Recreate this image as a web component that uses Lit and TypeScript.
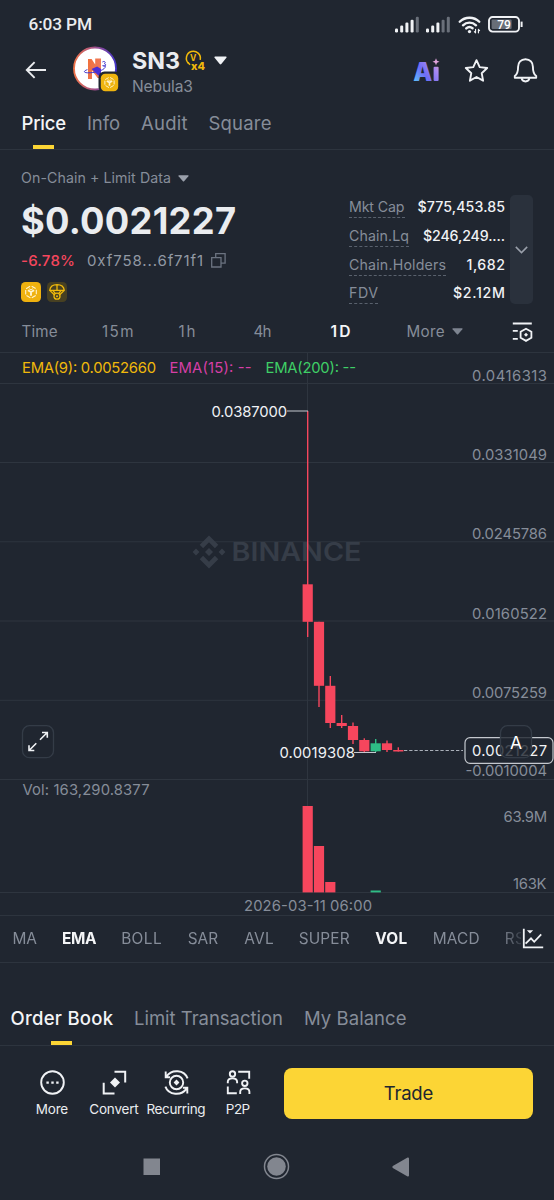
import { LitElement, html, svg, css } from "lit";
import { customElement, property } from "lit/decorators.js";

/** Single-line label whose tracking is adjusted so that it fills a given width. */
@customElement("fit-text")
class FitText extends LitElement {
  static styles = css`
    :host { display: inline-block; white-space: nowrap; }
    span { display: inline-block; }
  `;
  @property({ type: Number }) w = 0;
  @property() text = "";
  render() {
    return html`<span>${this.text}</span>`;
  }
  updated() {
    const el = this.renderRoot.querySelector("span") as HTMLElement;
    el.style.letterSpacing = "0px";
    const natural = el.getBoundingClientRect().width;
    const step = (this.w - natural) / Math.max(1, this.text.length - 1);
    el.style.letterSpacing = `${step.toFixed(3)}px`;
    this.style.width = `${this.w}px`;
  }
}

const t = (text: string, w: number, cls = "") =>
  html`<fit-text class=${cls} .text=${text} .w=${w}></fit-text>`;

/* x-centre, body and wick extents in chart pixels */
const CANDLES = [
  { x: 307.7, top: 584.3, bottom: 621.8, high: 411, low: 637, up: false },
  { x: 319, top: 621.8, bottom: 685.8, high: 621.8, low: 707, up: false },
  { x: 330.3, top: 685.8, bottom: 723, high: 676, low: 728, up: false },
  { x: 341.7, top: 723, bottom: 726, high: 715, low: 728, up: false },
  { x: 353, top: 726, bottom: 740, high: 722.5, low: 744, up: false },
  { x: 364.3, top: 740, bottom: 751.3, high: 738.3, low: 752, up: false },
  { x: 375.7, top: 743.3, bottom: 751.3, high: 739, low: 752, up: true },
  { x: 387, top: 743.3, bottom: 750, high: 740.5, low: 752, up: false },
  { x: 398.3, top: 750, bottom: 751.5, high: 747.3, low: 751.5, up: false },
];
const VOLUMES = [
  { x: 307.7, top: 806, up: false },
  { x: 319, top: 846, up: false },
  { x: 330.3, top: 882, up: false },
  { x: 375.7, top: 890.5, up: true },
];
const GRID = [383.5, 462.5, 541.8, 621, 700.3, 779.5, 892.5];
const AXIS: [string, number, number, number][] = [
  ["0.0416313", 472, 75, 380.8],
  ["0.0331049", 472, 75, 460],
  ["0.0245786", 472, 75, 539.3],
  ["0.0160522", 472, 75, 618.7],
  ["0.0075259", 472, 75, 697.7],
  ["-0.0010004", 465.5, 81.5, 775.7],
  ["63.9M", 503.5, 43.5, 822.3],
  ["163K", 513, 33.5, 888.5],
];

const RED = "#f6465d";
const GREEN = "#2ebd85";

const cube = svg`
  <g fill="none" stroke="#fff4cf" stroke-linejoin="round">
    <path d="M10 3.800l5.300 3.100v6.200L10 16.200l-5.300-3.100V6.900z" stroke-width="1.100" stroke-dasharray="4.600 1.500" stroke-dashoffset="-0.800"/>
    <path d="M6.900 8.200L10 10l3.100-1.800M10 10v3.800" stroke-width="1.900"/>
    <path d="M8 6.700l2 1.100 2-1.100" stroke-width=".9"/>
  </g>`;

@customElement("app-root")
class AppRoot extends LitElement {
  static styles = css`
    * { box-sizing: border-box; }
    :host {
      display: flex; flex-direction: column; width: 554px; height: 1200px; overflow: hidden;
      background: #202630; color: #eaecef; font-family: Inter, sans-serif; line-height: 1;
    }
    svg { display: block; flex: none; overflow: visible; }
    .row { display: flex; align-items: center; flex: none; }
    .grey { color: #868d99; }

    .status { height: 49px; padding: 0 31.5px 0 28.5px; justify-content: space-between; font: 500 17.3px/1 Roboto, sans-serif; }
    .status .icons { gap: 7px; }

    .header { height: 48px; padding-top: 1px; align-items: flex-start; }
    .back { margin: 11px 0 0 25px; }
    .avatar { margin: -5px 0 0 26px; }
    .names { margin-left: 10px; width: 269px; display: flex; flex-direction: column; }
    .names .row { height: 21px; gap: 5px; }
    .sym { font-size: 23.3px; font-weight: 700; }
    .caret { margin-left: 2px; }
    .full { font-size: 15.6px; margin-top: 8px; }
    .ai { margin: 7px 0 0 12px; }
    .star { margin: 8px 0 0 22.5px; }
    .bell { margin: 8px 0 0 24px; }

    .tabs { position: relative; height: 53px; padding-left: 21.5px; font-size: 18.5px; border-bottom: 1px solid #2d343e; gap: 21px; }
    .on { color: #f4f5f7; font-weight: 500; }
    .mark { position: absolute; bottom: 0; width: 21px; height: 4.5px; background: #fcd535; }
    .tabs .mark { left: 33px; }

    .summary { height: 161px; display: flex; flex: none; }
    .left { width: 349px; padding-left: 21px; }
    .source { height: 22px; margin-top: 17px; font-size: 14.2px; gap: 7px; }
    .price { height: 44px; margin-top: 10px; font-size: 36.3px; font-weight: 700; align-items: center; display: flex; }
    .change { height: 20px; margin-top: 7px; font-size: 15px; }
    .down { color: #f6465d; margin-right: 12px; font-weight: 500; }
    .addr { margin-right: 8px; color: #9299a4; }
    .badges { gap: 6px; margin-top: 12px; }
    .stats { width: 156px; padding-top: 43px; }
    .stat { height: 28.7px; justify-content: space-between; font-size: 14.2px; }
    .stat .key { height: 22px; padding-top: 4px; border-bottom: 1px dashed #59616d; color: #868d99; }
    .stat .val { color: #f0f2f5; font-weight: 500; }
    .expand { width: 23px; height: 109px; margin: 45px 0 0 5px; border-radius: 5px; background: #2a313c; display: flex; align-items: center; justify-content: center; }

    .intervals { height: 42px; padding-left: 21.5px; font-size: 15.2px; color: #868d99; border-bottom: 1px solid #2d343e; }
    .i1 { margin-left: 44.5px; } .i2 { margin-left: 45px; } .i3 { margin-left: 58px; }
    .i4 { margin-left: 59px; color: #f4f5f7; font-weight: 600; font-size: 15.6px; }
    .i5 { margin: 0 7px 0 56px; }
    .tune { margin-left: 49px; }

    .chart text { font-family: Inter, sans-serif; font-size: 14.8px; }
    .chart .logo { font-size: 25.5px; font-weight: 600; }
    .chart .auto { font-size: 17.5px; }

    .indicators { height: 48px; border-top: 1px solid #2d343e; border-bottom: 1px solid #2d343e; font-size: 15.4px; color: #868d99; }
    .scroller { width: 521px; height: 46px; padding-left: 12.5px; overflow: hidden; mask-image: linear-gradient(90deg, #000 500px, transparent 527px); }
    .sel { color: #f4f5f7; font-weight: 700; }
    .m1 { margin-left: 25px; } .m2 { margin-left: 25px; } .m3 { margin-left: 26px; } .m4 { margin-left: 26px; }
    .m5 { margin-left: 25px; } .m6 { margin-left: 25.5px; } .m7 { margin-left: 25px; }
    .bar { width: 1px; height: 17px; background: #333b47; margin: 0 13px 0 12.5px; }
    .study { margin-left: 1px; }

    .orders { position: relative; height: 56px; margin-top: 27px; padding: 2px 0 0 10.5px; font-size: 18.5px; gap: 21px; border-bottom: 1px solid #2d343e; }
    .orders .mark { left: 51px; }

    .actions { height: 89px; padding: 22px 21px 0 21px; align-items: flex-start; font-size: 13.5px; }
    .act { width: 62px; display: flex; flex-direction: column; align-items: center; gap: 7px; }
    .act svg { margin-top: 0.5px; }
    .trade { width: 249px; height: 51px; margin-left: 15px; border-radius: 8px; background: #fcd535; color: #202630; font-size: 18.5px; display: flex; align-items: center; justify-content: center; }
    .nav { height: 65px; padding: 0 144.5px 2px 143px; justify-content: space-between; }
  `;

  signal(bars: number) {
    return html`<svg width="24.500" height="17" viewBox="0 0 24.500 17">
      ${[0, 1, 2, 3, 4].map((i) => svg`<rect x=${i * 5.2} y=${12.4 - i * 2.9} width="3" height=${4 + i * 2.9} rx="1.200"
        fill=${i < bars ? "#f0f2f5" : "#6a707a"}/>`)}
    </svg>`;
  }

  statusBar() {
    return html`<div class="row status">
      ${t("6:03 PM", 63.5)}
      <div class="row icons">
        ${this.signal(4)} ${this.signal(3)}
        <svg width="23" height="18" viewBox="0 0 24 18" fill="none" stroke="#f0f2f5" stroke-width="2.500" stroke-linecap="round">
          <path d="M1.800 5.600a14.600 14.600 0 0 1 20.400 0M5.200 9.300a9.800 9.800 0 0 1 13.600 0M8.600 12.600a5 5 0 0 1 6.600-.2"/>
          <circle cx="12" cy="15.800" r="1.700" fill="#f0f2f5" stroke="none"/>
          <path d="M18.300 13.600v3.600M21.300 13.600v3.600M17.100 16l1.200 1.200M21.300 13.600l1.200 1.200" stroke-width="1.200"/>
        </svg>
        <svg width="35" height="17" viewBox="0 0 35 17">
          <rect x="1" y="1" width="30" height="14.600" rx="3.600" fill="none" stroke="#f0f2f5" stroke-width="1.900"/>
          <rect x="3.600" y="3.600" width="20" height="9.400" rx="1" fill="#686e78"/>
          <path d="M33.600 5.600v5.400" stroke="#f0f2f5" stroke-width="2"/>
          <text x="16" y="12.500" font-family="Roboto, sans-serif" font-size="12" font-weight="500" fill="#fff" text-anchor="middle">79</text>
        </svg>
      </div>
    </div>`;
  }

  header() {
    return html`<div class="row header">
      <svg class="back" width="22" height="18" viewBox="0 0 22 18" fill="none" stroke="#eaecef" stroke-width="1.900">
        <path d="M21 9H2.200M9.600 1.200L1.800 9l7.800 7.800"/>
      </svg>
      <svg class="avatar" width="49" height="48" viewBox="0 0 49 48">
        <defs>
          <linearGradient id="ring" x1="0" x2="1"><stop offset="0" stop-color="#f07348"/><stop offset=".5" stop-color="#a0508c"/><stop offset="1" stop-color="#4536c8"/></linearGradient>
          <linearGradient id="n" x1="0" x2="1" y2=".3"><stop offset="0" stop-color="#f0703c"/><stop offset="1" stop-color="#ef7a5a"/></linearGradient>
        </defs>
        <circle cx="22" cy="23.500" r="21" fill="#fff" stroke="url(#ring)" stroke-width="1.800"/>
        <path d="M15 14h3.600l3.600 5.400V13.600H28V33h-3.400L19 25.600V34h-4z" fill="url(#n)"/>
        <path d="M18.600 24l5.600-2.400 3.800 2.400V31l-2.600-.4z" fill="#4b2fd6"/>
        <path d="M14.400 24.600c-4 1.400-4 3 0 3.200 7 .2 15.600-2 17.600-5.200 1.200-2-1.200-2.400-2.600-1.900" fill="none" stroke="#4335cc" stroke-width="1"/>
        <path d="M29.400 17c2-1.400 4 .3 2 1.700 2.200.4 1.500 2.900-1 2.600" fill="none" stroke="#4335cc" stroke-width="1"/>
        <rect x="25.500" y="26.500" width="22" height="21.500" rx="6" fill="#202630"/>
        <g transform="translate(27.800 28.800)"><rect width="17.400" height="17.400" rx="4.500" fill="#efb40f"/><g transform="scale(.87)">${cube}</g></g>
      </svg>
      <div class="names">
        <div class="row">
          ${t("SN3", 48, "sym")}
          <svg width="22" height="22" viewBox="0 0 22 22">
            <path d="M3.600 13.400a7 7 0 1 1 11.600-3.600" fill="none" stroke="#f0b90b" stroke-width="1.500"/>
            <path d="M2.700 12.200l2.400 2.600" stroke="#f0b90b" stroke-width="1.500"/>
            <text x="8.200" y="10.600" font-family="Inter, sans-serif" font-size="8.500" font-weight="700" fill="#f0b90b" text-anchor="middle">V</text>
            <text x="6" y="20.300" font-family="Inter, sans-serif" font-size="11" font-weight="800" fill="#f0b90b" textLength="14" lengthAdjust="spacingAndGlyphs">x4</text>
          </svg>
          <svg class="caret" width="13" height="9" viewBox="0 0 13 9"><path d="M1 .5h11q1 .3.400 1.200L7.300 8q-.8.800-1.600 0L.6 1.700Q0 .8 1 .5z" fill="#f0f2f5"/></svg>
        </div>
        ${t("Nebula3", 61, "full grey")}
      </div>
      <svg class="ai" width="28" height="26" viewBox="0 0 28 26">
        <defs><linearGradient id="aig" gradientUnits="userSpaceOnUse" x1="0" y1="24" x2="27" y2="4">
          <stop offset="0" stop-color="#5cc4f8"/><stop offset=".4" stop-color="#6f6cf6"/><stop offset=".75" stop-color="#a98af2"/><stop offset="1" stop-color="#f2a39c"/></linearGradient></defs>
        <text x=".3" y="24" font-family="Inter, sans-serif" font-size="26" font-weight="900" fill="url(#aig)" textLength="19" lengthAdjust="spacingAndGlyphs">A</text>
        <rect x="20.600" y="9.800" width="5" height="14.200" rx="1" fill="url(#aig)"/>
        <path d="M23 1.300l1 2.500 2.500 1-2.500 1-1 2.500-1-2.500-2.500-1 2.500-1z" fill="#e0a4dc"/>
      </svg>
      <svg class="star" width="25" height="26" viewBox="0 0 25 26" fill="none" stroke="#f0f2f5" stroke-width="1.900" stroke-linejoin="round">
        <path d="M12.500 2.200l3.200 6.900 7.500.9-5.500 5.200 1.400 7.500-6.600-3.700-6.600 3.700 1.400-7.500L1.800 10l7.500-.9z"/>
      </svg>
      <svg class="bell" width="25" height="26" viewBox="0 0 25 26" fill="none" stroke="#f0f2f5" stroke-width="1.900" stroke-linejoin="round">
        <path d="M12.500 1.200c-4.700 0-7.400 3.400-7.400 7.600 0 5-.5 7.300-3.300 9.300v1.600h21.400v-1.600c-2.800-2-3.300-4.300-3.300-9.300 0-4.200-2.700-7.600-7.400-7.600z"/>
        <path d="M8.600 20.200c.6 4.400 7.200 4.400 7.800 0"/>
      </svg>
    </div>`;
  }

  summary() {
    const stats: [string, number, string, number][] = [
      ["Mkt Cap", 55.5, "$775,453.85", 87.5],
      ["Chain.Lq", 60, "$246,249....", 82],
      ["Chain.Holders", 97, "1,682", 38.5],
      ["FDV", 29, "$2.12M", 52],
    ];
    return html`<div class="summary">
      <div class="left">
        <div class="row source grey">${t("On-Chain + Limit Data", 150)}
          <svg width="11" height="7" viewBox="0 0 11 7"><path d="M.8.3h9.400q.8.300.2 1L6.100 6.300q-.6.500-1.200 0L.6 1.300Q0 .6.8.3z" fill="#9aa0ab"/></svg>
        </div>
        <div class="price">${t("$0.0021227", 215)}</div>
        <div class="row change">${t("-6.78%", 54, "down")}${t("0xf758...6f71f1", 116, "addr")}
          <svg width="15" height="15" viewBox="0 0 15 15" fill="none" stroke="#6b7380" stroke-width="1.300"><path d="M.7 4.700h9.300V14H.7zM4.700 4.700v-4h9.400v9.400H10"/></svg>
        </div>
        <div class="row badges">
          <svg width="20" height="20" viewBox="0 0 20 20"><rect width="20" height="20" rx="4.500" fill="#efb10f"/>${cube}</svg>
          <svg width="20" height="20" viewBox="0 0 20 20"><rect width="20" height="20" rx="4.500" fill="#474022"/>
            <g fill="none" stroke="#f0b90b" stroke-width="1.300" stroke-linejoin="round">
              <path d="M2.700 8.400C3.200 4.600 6.200 2.700 10 2.700s6.800 1.900 7.300 5.700zM10 2.700v5.700M2.700 8.400l4.600 4.400M17.300 8.400l-4.600 4.400M6 8.600l2.400 3M14 8.600l-2.400 3"/>
              <circle cx="10" cy="14.200" r="3"/></g><circle cx="10" cy="14.200" r="1" fill="#f0b90b"/></svg>
        </div>
      </div>
      <div class="stats">
        ${stats.map(([k, kw, v, vw]) => html`<div class="row stat">${t(k, kw, "key")}${t(v, vw, "val")}</div>`)}
      </div>
      <div class="expand"><svg width="13" height="8" viewBox="0 0 13 8" fill="none" stroke="#9aa0ab" stroke-width="1.500"><path d="M.8.9l5.700 5.700L12.200.9"/></svg></div>
    </div>`;
  }

  chart() {
    return html`<svg class="chart" width="554" height="562" viewBox="0 353 554 562">
      <g stroke="#2e353f" stroke-width="1">
        ${GRID.map((y) => svg`<path d="M0 ${y}H554"/>`)}
        <path d="M307.500 353V892"/>
      </g>
      <g fill="#363d48">
        <path d="M209 535.500l9.300 9.300-3.400 3.400-5.900-5.900-5.900 5.900-3.400-3.400zM209 568.500l-9.300-9.300 3.400-3.400 5.900 5.900 5.900-5.900 3.400 3.400z"/>
        <path d="M196 548.600l3.400 3.400-3.400 3.400-3.400-3.400zM222 548.600l3.400 3.400-3.400 3.400-3.400-3.400zM209 548l4 4-4 4-4-4z"/>
        <text class="logo" x="231.500" y="561.200" textLength="130" lengthAdjust="spacingAndGlyphs">BINANCE</text>
      </g>
      ${CANDLES.map((c) => svg`<g fill=${c.up ? GREEN : RED}>
        <rect x=${c.x - 0.7} y=${c.high} width="1.400" height=${c.low - c.high}/>
        <rect x=${c.x - 5.1} y=${c.top} width="10.200" height=${c.bottom - c.top}/></g>`)}
      ${VOLUMES.map((v) => svg`<rect x=${v.x - 5.1} y=${v.top} width="10.200" height=${892.4 - v.top} fill=${v.up ? GREEN : RED}/>`)}
      <path d="M287 411H308M354 752.500H376" stroke="#c4c8ce" stroke-width="1.200"/>
      <path d="M404 750.500H463" stroke="#aab0b9" stroke-width="1.100" stroke-dasharray="3.300 1.900"/>
      <g fill="#f0b90b"><text x="22" y="372.600" textLength="134">EMA(9): 0.0052660</text></g>
      <g fill="#d63fa6"><text x="169.500" y="372.600" textLength="82">EMA(15): --</text></g>
      <g fill="#3fcf66"><text x="265.500" y="372.600" textLength="90.500">EMA(200): --</text></g>
      <g fill="#868d99">
        ${AXIS.map(([s, x, w, y]) => svg`<text x=${x} y=${y} textLength=${w}>${s}</text>`)}
        <text x="22.500" y="795.300" textLength="127">Vol: 163,290.8377</text>
        <text x="244" y="911" textLength="128">2026-03-11 06:00</text>
      </g>
      <g fill="#f0f2f5">
        <text x="211.500" y="416.600" textLength="75.500">0.0387000</text>
        <text x="279.500" y="758" textLength="75.500">0.0019308</text>
      </g>
      <rect x="465" y="737.700" width="88" height="25.600" rx="5" fill="#202630" stroke="#c4c8ce" stroke-width="1.200"/>
      <text x="472" y="755.800" textLength="75" fill="#f0f2f5">0.0021227</text>
      <rect x="500.500" y="725.700" width="31" height="32" rx="7" fill="#202630" fill-opacity=".82" stroke="#343c47" stroke-width="1.300"/>
      <text class="auto" x="516" y="748.500" text-anchor="middle" fill="#fff">A</text>
      <rect x="22.500" y="725.700" width="31" height="32" rx="7" fill="none" stroke="#343c47" stroke-width="1.300"/>
      <g fill="none" stroke="#f0f2f5" stroke-width="1.600">
        <path d="M40 739.700l7-7M42 732.500h5.300v5.300M36.300 743.300l-7 7M34.300 750.500H29v-5.300"/>
      </g>
    </svg>`;
  }

  actions() {
    return html`<div class="row actions">
      <div class="act">
        <svg width="27" height="27" viewBox="0 0 27 27"><circle cx="13.500" cy="13.500" r="11.300" fill="none" stroke="#f0f2f5" stroke-width="1.900"/>
          <path d="M7.400 12.400h2.400v2.400H7.400zM12.300 12.400h2.400v2.400h-2.400zM17.200 12.400h2.400v2.400h-2.400z" fill="#f0f2f5"/></svg>
        ${t("More", 32.5)}
      </div>
      <div class="act">
        <svg width="27" height="27" viewBox="0 0 27 27" fill="none" stroke="#f0f2f5" stroke-width="2">
          <path d="M13.500 2.700h10.700v10.700M2.700 13.800v10.600h10.800"/><path d="M14 8.500l5 5-5 5-5-5z" fill="#f0f2f5" stroke="none"/></svg>
        ${t("Convert", 49.5)}
      </div>
      <div class="act">
        <svg width="27" height="27" viewBox="0 0 27 27" fill="none" stroke="#f0f2f5" stroke-width="1.900">
          <circle cx="13.500" cy="13.500" r="6.700"/><path d="M13.500 10.600l2.900 2.900-2.900 2.900-2.900-2.900z" fill="#f0f2f5" stroke="none"/>
          <path d="M24.600 9.400C21.400.6 8.600-.2 3.500 7.400M2.700 2.600v5.600h4.400M2.400 17.600c3.200 8.800 16 9.600 21.100 2M24.300 24.400v-5.600h-4.400"/></svg>
        ${t("Recurring", 59)}
      </div>
      <div class="act">
        <svg width="27" height="27" viewBox="0 0 27 27" fill="none" stroke="#f0f2f5" stroke-width="1.900">
          <circle cx="7.500" cy="5" r="2.700"/><path d="M2.800 14.200v-1.400c0-4.600 9.300-4.600 9.300 0v1.400M13.200 2.800h11v7M2.800 17.400v6.800h9"/>
          <circle cx="19.800" cy="14.300" r="2.700"/><path d="M15.200 25v-2.200c0-4.600 9.200-4.600 9.200 0V25"/></svg>
        ${t("P2P", 24.5)}
      </div>
      <div class="trade">${t("Trade", 49.5)}</div>
    </div>`;
  }

  render() {
    return html`
      ${this.statusBar()} ${this.header()}
      <div class="row tabs grey">
        ${t("Price", 44.5, "on")}${t("Info", 33)}${t("Audit", 46.5)}${t("Square", 63)}
        <div class="mark"></div>
      </div>
      ${this.summary()}
      <div class="row intervals">
        ${t("Time", 36)}${t("15m", 31.5, "i1")}${t("1h", 17, "i2")}${t("4h", 18, "i3")}${t("1D", 20, "i4")}${t("More", 38, "i5")}
        <svg width="11" height="7" viewBox="0 0 11 7"><path d="M.8.3h9.400q.8.300.2 1L6.100 6.300q-.6.500-1.200 0L.6 1.300Q0 .6.8.3z" fill="#7d8490"/></svg>
        <svg class="tune" width="21" height="20" viewBox="0 0 21 20" fill="none" stroke="#f0f2f5" stroke-width="1.800">
          <path d="M.8 1.500h19M.8 8.800h5M.8 16.800h5"/><path d="M14 6.800l5.400 3v6L14 18.900l-5.400-3.100v-6z"/><path d="M14 10.700l2 2-2 2-2-2z" fill="#f0f2f5" stroke="none"/></svg>
      </div>
      ${this.chart()}
      <div class="row indicators">
        <div class="row scroller">
          ${t("MA", 24.5)}${t("EMA", 34.5, "m1 sel")}${t("BOLL", 40.5, "m2")}${t("SAR", 30.5, "m3")}${t("AVL", 29.5, "m4")}${t("SUPER", 51, "m5")}
          <div class="bar"></div>
          ${t("VOL", 32, "sel")}${t("MACD", 47, "m6")}${t("RSI", 25, "m7")}
        </div>
        <svg class="study" width="22" height="22" viewBox="0 0 22 22" fill="none" stroke="#f0f2f5" stroke-width="1.800">
          <path d="M1.800.8v18.600h19.400M3.600 15.600L9 10.400l3.200 3.400 7-7.400"/><path d="M4.800 2.200h6.400L8 5.600z" fill="#f0f2f5" stroke="none"/></svg>
      </div>
      <div class="row orders grey">
        ${t("Order Book", 102.5, "on")}${t("Limit Transaction", 149)}${t("My Balance", 102.5)}
        <div class="mark"></div>
      </div>
      ${this.actions()}
      <div class="row nav">
        <svg width="18" height="18" viewBox="0 0 18 18"><path d="M.5.5h16.500V17H.5z" fill="#82868f"/></svg>
        <svg width="27" height="27" viewBox="0 0 27 27"><circle cx="13.500" cy="13.500" r="12" fill="none" stroke="#82868f" stroke-width="1.500"/><circle cx="13.500" cy="13.500" r="9.300" fill="#82868f"/></svg>
        <svg width="18" height="20" viewBox="0 0 18 20"><path d="M.8 9.100L15.600.5q1.200-.4 1.400.9v17.200q-.2 1.300-1.400.9L.8 10.900q-1-.9 0-1.800z" fill="#82868f"/></svg>
      </div>`;
  }
}
